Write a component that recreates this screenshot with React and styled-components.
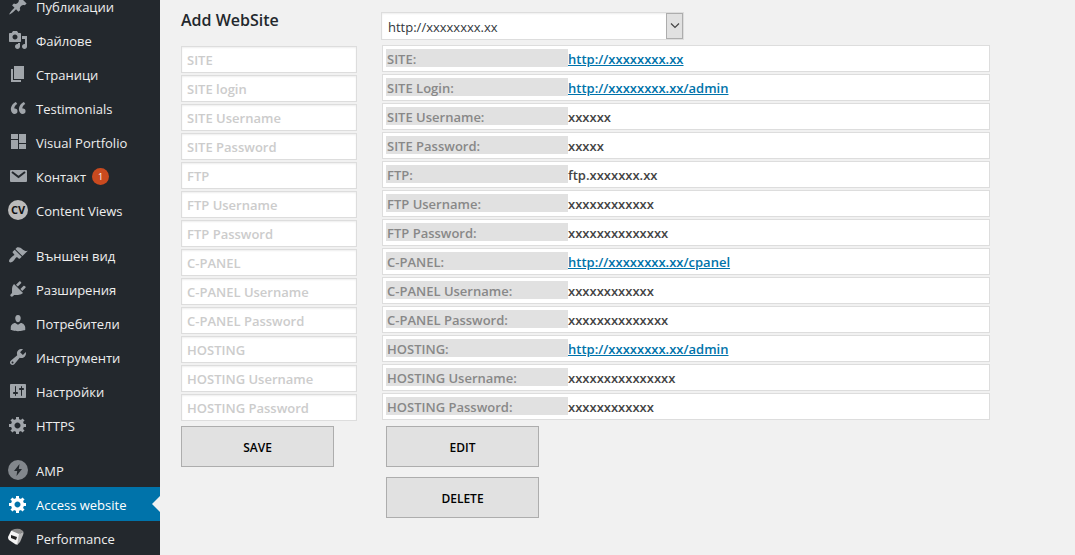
import React, { useState } from "react";
import styled, { createGlobalStyle } from "styled-components";

const GlobalStyle = createGlobalStyle`
  * { box-sizing: border-box; }
  body {
    margin: 0;
    background: #f1f1f1;
    color: #444;
    font: 13px/18px "Segoe UI", "Open Sans", "Noto Sans", sans-serif;
  }
`;

const Page = styled.div`
  display: flex;
  height: 100vh;
`;

const Sidebar = styled.nav`
  display: flex;
  flex-direction: column;
  justify-content: flex-end;
  flex: 0 0 160px;
  overflow: hidden;
  background: #23282d;
`;

const Menu = styled.ul`
  list-style: none;
  margin: 0;
  padding: 0;
`;

const MenuItem = styled.li`
  margin-top: ${(p) => (p.$spaced ? "11px" : "0")};
`;

const MenuLink = styled.a`
  position: relative;
  display: flex;
  align-items: center;
  height: 34px;
  padding: 0 8px;
  color: ${(p) => (p.$current ? "#fff" : "#eee")};
  background: ${(p) => (p.$current ? "#0073aa" : "transparent")};
  font-size: 13px;
  text-decoration: none;
  white-space: nowrap;

  svg {
    flex: none;
    width: 20px;
    height: 20px;
    margin-right: 8px;
    fill: ${(p) => (p.$current ? "#fff" : "#a0a5aa")};
  }
`;

const MenuLabel = styled.span`
  padding-top: 2px;
  line-height: 14px;
`;

const CurrentArrow = styled.span`
  position: absolute;
  right: 0;
  top: 50%;
  margin-top: -8px;
  border: 8px solid transparent;
  border-left-width: 0;
  border-right-color: #f1f1f1;
`;

const Badge = styled.span`
  flex: none;
  width: 17px;
  margin-left: 6px;
  border-radius: 9px;
  background: #ca4a1f;
  color: #fff;
  font-size: 9px;
  line-height: 17px;
  text-align: center;
`;

const Content = styled.main`
  flex: 1;
  min-width: 0;
  display: grid;
  grid-template-columns: 176px minmax(0, 1fr);
  grid-template-rows: 28px auto;
  column-gap: 24px;
  row-gap: 5px;
  align-content: start;
  padding: 12px 85px 0 21px;
`;

const Title = styled.h1`
  margin: 0;
  color: #23282d;
  font-size: 16px;
  font-weight: 600;
  line-height: 16px;
`;

const SelectBox = styled.div`
  position: relative;
  width: 303px;
  max-width: 100%;
`;

const Select = styled.select`
  appearance: none;
  width: 100%;
  height: 28px;
  padding: 2px 24px 0 6px;
  border: 1px solid #ddd;
  border-radius: 0;
  background: #fff;
  color: #32373c;
  font: inherit;
  box-shadow: inset 0 1px 2px rgba(0, 0, 0, 0.07);
`;

const SelectArrow = styled.span`
  position: absolute;
  top: 1px;
  right: 1px;
  display: flex;
  align-items: center;
  justify-content: center;
  width: 17px;
  height: 26px;
  border: 1px solid #adadad;
  background: #e1e1e1;
  pointer-events: none;
`;

const Form = styled.form`
  display: flex;
  flex-direction: column;
  gap: 2px;
  padding-top: 1px;
`;

const Field = styled.input`
  width: 100%;
  height: 27px;
  padding: 1px 5px 0;
  border: 1px solid #ddd;
  background: #fff;
  color: #32373c;
  font: inherit;
  font-weight: 600;
  box-shadow: inset 0 1px 2px rgba(0, 0, 0, 0.07);

  &::placeholder {
    color: #ccc;
    opacity: 1;
  }
`;

const Details = styled.section`
  padding-left: 1px;
`;

const DetailList = styled.dl`
  display: flex;
  flex-direction: column;
  gap: 2px;
  margin: 0;
`;

const DetailRow = styled.div`
  display: flex;
  height: 27px;
  padding: 3px;
  border: 1px solid #ddd;
  background: #fff;
  font-weight: 600;
  line-height: 20px;
`;

const DetailName = styled.dt`
  flex: 0 0 182px;
  height: 18px;
  padding-left: 1px;
  background: #e1e1e1;
  color: #888;
`;

const DetailValue = styled.dd`
  margin: 0;
  color: #444;

  a { color: #0073aa; }
`;

const Actions = styled.div`
  display: flex;
  flex-direction: column;
  align-items: flex-start;
  gap: 10px;
  padding: ${(p) => (p.$inset ? "6px 0 0 4px" : "3px 0 0")};
`;

const Button = styled.button`
  width: 153px;
  height: 41px;
  padding: 2px 0 0;
  border: 1px solid #adadad;
  background: #e1e1e1;
  color: #000;
  font: inherit;
  font-size: 12px;
  font-weight: 600;
`;

const paths = {
  post: "M10.44 3.02l1.82-1.82 6.36 6.35-1.83 1.82c-1.05-.68-2.48-.57-3.41.36l-.75.75c-.92.93-1.04 2.35-.35 3.41l-1.83 1.82-2.41-2.41-2.8 2.79c-.42.42-3.38 2.71-3.8 2.29s1.86-3.39 2.28-3.81l2.79-2.79L4.1 9.36l1.83-1.82c1.05.69 2.48.57 3.4-.36l.75-.75c.93-.92 1.05-2.35.36-3.41z",
  media: "M13 11V4c0-.55-.45-1-1-1h-1.67L9 1H5L3.67 3H2c-.55 0-1 .45-1 1v7c0 .55.45 1 1 1h10c.55 0 1-.45 1-1zM7 4.5c1.38 0 2.5 1.12 2.5 2.5S8.38 9.5 7 9.5 4.5 8.38 4.5 7 5.62 4.5 7 4.5zM14 6h5v10.5c0 1.38-1.12 2.5-2.5 2.5S14 17.88 14 16.5s1.12-2.5 2.5-2.5c.17 0 .34.02.5.05V9h-3V6zm-4 8.05V13h2v3.5c0 1.38-1.12 2.5-2.5 2.5S7 17.88 7 16.5 8.12 14 9.5 14c.17 0 .34.02.5.05z",
  page: "M6 15V2h10v13H6zm-1 1h8v2H3V5h2v11z",
  portfolio: "M3 2h7v5H3zM3 8h7v9H3zM11 2h7v9h-7zM11 12h7v5h-7z",
  appearance: "M14.48 11.06L7.41 3.99l1.5-1.5c.5-.56 2.3-.47 3.51.32 1.21.8 1.43 1.28 2.91 2.1 1.18.64 2.45 1.26 4.45.85zm-.71.71L6.7 4.7 4.93 6.47c-.39.39-.39 1.02 0 1.41l1.06 1.06c.39.39.39 1.03 0 1.42-.6.6-1.43 1.11-2.21 1.69-.35.26-.7.53-1.01.84C1.43 14.23.4 16.08 1.4 17.07c.99 1 2.84-.03 4.18-1.36.31-.31.58-.66.85-1.02.57-.78 1.08-1.61 1.69-2.21.39-.39 1.02-.39 1.41 0l1.06 1.06c.39.39 1.02.39 1.41 0z",
  plugins: "M13.11 4.36L9.87 7.6 8 5.73l3.24-3.24c.35-.34 1.05-.2 1.56.32.52.51.66 1.21.31 1.55zm-8 1.77l.91-1.12 9.01 9.01-1.19.84c-.71.71-2.63 1.16-3.82 1.16H6.14L4.9 17.26c-.59.59-1.54.59-2.12 0-.59-.58-.59-1.53 0-2.12l1.24-1.24v-3.88c0-1.13.4-3.19 1.09-3.89zm7.26 3.97l3.24-3.24c.34-.35 1.04-.21 1.55.31.52.51.66 1.21.31 1.55l-3.24 3.25z",
  users: "M10 9.25c-2.27 0-2.73-3.44-2.73-3.44C7 4.02 7.82 2 9.97 2c2.16 0 2.98 2.02 2.71 3.81 0 0-.41 3.44-2.68 3.44zm0 2.57L12.72 10c2.39 0 4.52 2.33 4.52 4.53v2.49s-3.65 1.13-7.24 1.13c-3.65 0-7.24-1.13-7.24-1.13v-2.49c0-2.25 1.94-4.48 4.47-4.48z",
  tools: "M16.68 9.77c-1.34 1.34-3.3 1.67-4.95.99l-5.41 6.52c-.99.99-2.59.99-3.58 0s-.99-2.59 0-3.57l6.52-5.42c-.68-1.65-.35-3.61.99-4.95 1.28-1.28 3.12-1.62 4.72-1.06l-2.89 2.89 2.82 2.82 2.86-2.87c.53 1.58.18 3.39-1.08 4.65zM3.81 16.21c.4.39 1.04.39 1.43 0 .4-.4.4-1.04 0-1.43-.39-.4-1.03-.4-1.43 0-.39.39-.39 1.03 0 1.43z",
  settings: "M18 16V4c0-.55-.45-1-1-1H3c-.55 0-1 .45-1 1v12c0 .55.45 1 1 1h14c.55 0 1-.45 1-1zM8 11h1c.55 0 1 .45 1 1s-.45 1-1 1H8v1.5c0 .28-.22.5-.5.5s-.5-.22-.5-.5V13H6c-.55 0-1-.45-1-1s.45-1 1-1h1V5.5c0-.28.22-.5.5-.5s.5.22.5.5V11zm5-2h-1c-.55 0-1-.45-1-1s.45-1 1-1h1V5.5c0-.28.22-.5.5-.5s.5.22.5.5V7h1c.55 0 1 .45 1 1s-.45 1-1 1h-1v5.5c0 .28-.22.5-.5.5s-.5-.22-.5-.5V9z",
  gear: "M18 12h-2.18c-.17.7-.44 1.35-.81 1.93l1.54 1.54-2.1 2.1-1.54-1.54c-.58.36-1.23.63-1.91.79V19H8v-2.18c-.68-.16-1.33-.43-1.91-.79l-1.54 1.54-2.12-2.12 1.54-1.54c-.36-.58-.63-1.23-.79-1.91H1V9.03h2.17c.16-.7.44-1.35.8-1.94L2.43 5.55l2.1-2.1 1.54 1.54c.58-.37 1.24-.64 1.93-.81V2h3v2.18c.68.16 1.33.43 1.91.79l1.54-1.54 2.12 2.12-1.54 1.54c.36.59.64 1.24.8 1.94H18V12zm-8.5 1.5c1.66 0 3-1.34 3-3s-1.34-3-3-3-3 1.34-3 3 1.34 3 3 3z",
  quote: "M9.49 13.22c0-.74-.2-1.38-.61-1.9-.62-.78-1.83-.88-2.53-.72-.29-1.65 1.11-3.75 2.92-4.65L7.88 4c-2.73 1.3-5.42 4.28-4.96 8.05C3.21 14.43 4.59 16 6.54 16c.85 0 1.56-.25 2.12-.75s.83-1.18.83-2.03zm8.05 0c0-.74-.2-1.38-.61-1.9-.63-.78-1.83-.88-2.53-.72-.29-1.65 1.11-3.75 2.92-4.65L15.93 4c-2.73 1.3-5.41 4.28-4.95 8.05.28 2.38 1.66 3.95 3.61 3.95.85 0 1.56-.25 2.12-.75s.83-1.18.83-2.03z",
};

function Icon({ name }) {
  if (name === "views") {
    return (
      <svg viewBox="0 0 20 20" aria-hidden="true">
        <circle cx="10" cy="10" r="10" fill="#bbb" />
        <text x="10" y="14" textAnchor="middle" fontFamily="Open Sans, sans-serif" fontSize="11" fontWeight="700" fill="#111">CV</text>
      </svg>
    );
  }
  if (name === "email") {
    return (
      <svg viewBox="0 0 20 20" aria-hidden="true">
        <rect x="2" y="4" width="17" height="12" rx="1" />
        <path d="M4 6l6.500 5L17 6" fill="none" stroke="#23282d" strokeWidth="2" />
      </svg>
    );
  }
  if (name === "amp") {
    return (
      <svg viewBox="0 0 20 20" aria-hidden="true">
        <circle cx="10" cy="10" r="10" fill="#82878c" />
        <path d="M11.500 4L6 11h3.200l-.7 5L14 9h-3.200z" fill="#23282d" />
      </svg>
    );
  }
  if (name === "cube") {
    return (
      <svg viewBox="0 0 20 20" aria-hidden="true">
        <path d="M3 3Q4 2 6 2l6 3-2 11q-1 1-3 0l-6-4Q0 11 0 9z" fill="#f4f4f4" />
        <path d="M4 2q4-2 8-1l3 2q1 1 0 1l-4 2-7-3z" fill="#8b8b8b" />
        <path d="M11 6l4-2q1 0 0 3l-3 7-3 3z" fill="#b5b5b5" />
        <path d="M3 7l6 2-1 3-5-2z" fill="#222" />
      </svg>
    );
  }
  return (
    <svg viewBox="0 0 20 20" aria-hidden="true">
      <path d={paths[name]} />
    </svg>
  );
}

const menu = [
  { label: "Публикации", icon: "post" },
  { label: "Файлове", icon: "media" },
  { label: "Страници", icon: "page" },
  { label: "Testimonials", icon: "quote" },
  { label: "Visual Portfolio", icon: "portfolio" },
  { label: "Контакт", icon: "email", count: 1 },
  { label: "Content Views", icon: "views" },
  { label: "Външен вид", icon: "appearance", spaced: true },
  { label: "Разширения", icon: "plugins" },
  { label: "Потребители", icon: "users" },
  { label: "Инструменти", icon: "tools" },
  { label: "Настройки", icon: "settings" },
  { label: "HTTPS", icon: "gear" },
  { label: "AMP", icon: "amp", spaced: true },
  { label: "Access website", icon: "gear", current: true },
  { label: "Performance", icon: "cube" },
];

const details = [
  { field: "SITE", name: "SITE:", value: "http://xxxxxxxx.xx", link: true },
  { field: "SITE login", name: "SITE Login:", value: "http://xxxxxxxx.xx/admin", link: true },
  { field: "SITE Username", name: "SITE Username:", value: "xxxxxx" },
  { field: "SITE Password", name: "SITE Password:", value: "xxxxx" },
  { field: "FTP", name: "FTP:", value: "ftp.xxxxxxx.xx" },
  { field: "FTP Username", name: "FTP Username:", value: "xxxxxxxxxxxx" },
  { field: "FTP Password", name: "FTP Password:", value: "xxxxxxxxxxxxxx" },
  { field: "C-PANEL", name: "C-PANEL:", value: "http://xxxxxxxx.xx/cpanel", link: true },
  { field: "C-PANEL Username", name: "C-PANEL Username:", value: "xxxxxxxxxxxx" },
  { field: "C-PANEL Password", name: "C-PANEL Password:", value: "xxxxxxxxxxxxxx" },
  { field: "HOSTING", name: "HOSTING:", value: "http://xxxxxxxx.xx/admin", link: true },
  { field: "HOSTING Username", name: "HOSTING Username:", value: "xxxxxxxxxxxxxxx" },
  { field: "HOSTING Password", name: "HOSTING Password:", value: "xxxxxxxxxxxx" },
];

export default function App() {
  const [site, setSite] = useState("http://xxxxxxxx.xx");
  return (
    <Page>
      <GlobalStyle />
      <Sidebar>
        <Menu>
          {menu.map((item) => (
            <MenuItem key={item.label} $spaced={item.spaced}>
              <MenuLink href="#" $current={item.current} aria-current={item.current ? "page" : undefined}>
                <Icon name={item.icon} />
                <MenuLabel>{item.label}</MenuLabel>
                {item.count && <Badge>{item.count}</Badge>}
                {item.current && <CurrentArrow />}
              </MenuLink>
            </MenuItem>
          ))}
        </Menu>
      </Sidebar>
      <Content>
        <Title>Add WebSite</Title>
        <SelectBox>
          <Select aria-label="Website" value={site} onChange={(e) => setSite(e.target.value)}>
            <option>http://xxxxxxxx.xx</option>
          </Select>
          <SelectArrow>
            <svg width="10" height="6" viewBox="0 0 10 6" aria-hidden="true">
              <path d="M1 .5l4 4 4-4" fill="none" stroke="#444" strokeWidth="1.200" />
            </svg>
          </SelectArrow>
        </SelectBox>
        <Form onSubmit={(e) => e.preventDefault()}>
          {details.map((d) => (
            <Field key={d.field} type="text" aria-label={d.field} placeholder={d.field} />
          ))}
          <Actions>
            <Button type="submit">SAVE</Button>
          </Actions>
        </Form>
        <Details>
          <DetailList>
            {details.map((d) => (
              <DetailRow key={d.name}>
                <DetailName>{d.name}</DetailName>
                <DetailValue>{d.link ? <a href="#">{d.value}</a> : d.value}</DetailValue>
              </DetailRow>
            ))}
          </DetailList>
          <Actions $inset>
            <Button type="button">EDIT</Button>
            <Button type="button">DELETE</Button>
          </Actions>
        </Details>
      </Content>
    </Page>
  );
}
